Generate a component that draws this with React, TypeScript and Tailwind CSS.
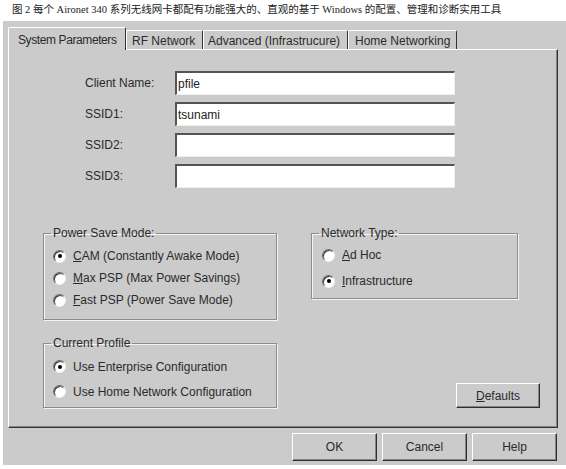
import type { ReactNode } from "react";
import clsx from "clsx";

const ui = "font-['Liberation_Sans',Arial,sans-serif] text-[12px] text-[#2a2a2a]";

function Radio({ checked }: { checked?: boolean }) {
    return (
        <span className="flex h-[13px] w-[13px] shrink-0 items-center justify-center rounded-full border border-t-[#6a6a6a] border-l-[#6a6a6a] border-r-[#f2f2f2] border-b-[#f2f2f2] bg-white shadow-[inset_1px_1px_0_#3a3a3a]">
            {checked && <span className="h-[4px] w-[4px] rounded-full bg-black" />}
        </span>
    );
}

function Option({ checked, children, className }: { checked?: boolean; children: ReactNode; className?: string }) {
    return (
        <div className={clsx("flex items-center gap-[7px]", className)}>
            <Radio checked={checked} />
            <span className="leading-[14px]">{children}</span>
        </div>
    );
}

function Group({ title, children, className }: { title: string; children: ReactNode; className?: string }) {
    return (
        <fieldset className={clsx("border border-[#8c8c8c] shadow-[inset_1px_1px_0_#f4f4f4,1px_1px_0_#f4f4f4]", className)}>
            <legend className="ml-[7px] px-[2px] leading-[14px]">{title}</legend>
            {children}
        </fieldset>
    );
}

function Button({ children, className }: { children: ReactNode; className?: string }) {
    return (
        <div
            className={clsx(
                "flex items-center justify-center border border-t-white border-l-white border-r-[#2e2e2e] border-b-[#2e2e2e] bg-[#cbcbcb] shadow-[inset_-1px_-1px_0_#858585]",
                className
            )}
        >
            {children}
        </div>
    );
}

function Field({ label, value }: { label: string; value?: string }) {
    return (
        <div className="flex h-[24px] items-center">
            <span className="w-[90px]">{label}</span>
            <div className="flex h-[24px] w-[280px] items-center border-t-2 border-l-2 border-t-[#555] border-l-[#555] border-r border-b border-r-[#eee] border-b-[#eee] bg-white pl-[1px] text-[#222]">
                {value}
            </div>
        </div>
    );
}

const tab = "border-t border-l border-t-white border-l-white border-r border-r-[#333] rounded-t-[2px] bg-[#cbcbcb] leading-[14px] whitespace-nowrap";

export default function App() {
    return (
        <div className="h-[469px] w-[566px] overflow-hidden bg-white">
            {/* caption */}
            <div className="h-[21px] pl-[12px] font-['Liberation_Serif','Noto_Sans_CJK_SC',serif] text-[10.5px] leading-[20px] text-[#222]">
                图 2 每个 Aironet 340 系列无线网卡都配有功能强大的、直观的基于 Windows 的配置、管理和诊断实用工具
            </div>

            {/* dialog */}
            <div className={clsx("ml-[3px] h-[444px] bg-[#cbcbcb] pl-[5px] pt-[6px]", ui)}>
                {/* tabs */}
                <div className="flex h-[22px] items-end">
                    <div className={clsx(tab, "relative z-10 -mb-px h-[23px] w-[118px] pl-[9px] pt-[5px] tracking-[-0.4px]")}>
                        System Parameters
                    </div>
                    <div className={clsx(tab, "h-[19px] w-[77px] pl-[5px] pt-[3px]")}>RF Network</div>
                    <div className={clsx(tab, "h-[19px] w-[145px] pl-[4px] pt-[3px]")}>Advanced (Infrastrucure)</div>
                    <div className={clsx(tab, "h-[19px] w-[109px] pl-[6px] pt-[3px]")}>Home Networking</div>
                </div>

                {/* panel */}
                <div className="flex h-[379px] w-[550px] flex-col border border-t-white border-l-white border-r-[#333] border-b-[#333] shadow-[inset_-1px_-1px_0_#858585]">
                    <div className="flex flex-col gap-[7px] pl-[76px] pt-[21px]">
                        <Field label="Client Name:" value="pfile" />
                        <Field label="SSID1:" value="tsunami" />
                        <Field label="SSID2:" />
                        <Field label="SSID3:" />
                    </div>

                    <div className="mt-[38px] flex h-[182px] pl-[34px]">
                        <div className="flex w-[234px] flex-col">
                            <Group title="Power Save Mode:" className="h-[94px] pt-[5px]">
                                <Option checked className="h-[22px] pl-[9px]">
                                    <u>C</u>AM (Constantly Awake Mode)
                                </Option>
                                <Option className="h-[22px] pl-[9px]">
                                    <u>M</u>ax PSP (Max Power Savings)
                                </Option>
                                <Option className="h-[22px] pl-[9px]">
                                    <u>F</u>ast PSP (Power Save Mode)
                                </Option>
                            </Group>
                            <Group title="Current Profile" className="mt-[16px] h-[72px] pt-[4px]">
                                <Option checked className="h-[25px] pl-[9px]">
                                    Use Enterprise Configuration
                                </Option>
                                <Option className="h-[25px] pl-[9px]">Use Home Network Configuration</Option>
                            </Group>
                        </div>

                        <div className="flex flex-1 flex-col pr-[17px]">
                            <Group title="Network Type:" className="ml-[34px] h-[73px] w-[207px] pt-[2px]">
                                <Option className="h-[26px] gap-[6px] pl-[10px]">
                                    <u>A</u>d Hoc
                                </Option>
                                <Option checked className="h-[26px] gap-[6px] pl-[10px]">
                                    <u>I</u>nfrastructure
                                </Option>
                            </Group>
                            <Button className="mt-auto h-[25px] w-[84px] self-end">
                                <span>
                                    <u>D</u>efaults
                                </span>
                            </Button>
                        </div>
                    </div>
                </div>

                {/* bottom buttons */}
                <div className="flex justify-end gap-[5px] pr-[9px] pt-[5px]">
                    <Button className="h-[28px] w-[85px]">OK</Button>
                    <Button className="h-[28px] w-[85px]">Cancel</Button>
                    <Button className="h-[28px] w-[85px]">Help</Button>
                </div>
            </div>
        </div>
    );
}
